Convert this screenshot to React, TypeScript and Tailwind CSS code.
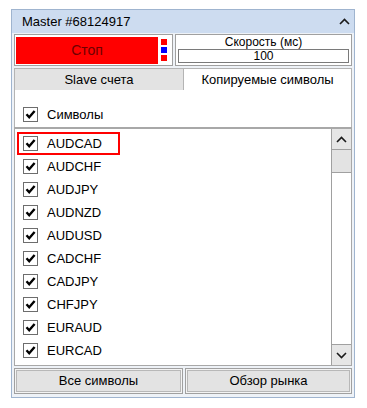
import React from 'react';

const symbols = [
  'AUDCAD',
  'AUDCHF',
  'AUDJPY',
  'AUDNZD',
  'AUDUSD',
  'CADCHF',
  'CADJPY',
  'CHFJPY',
  'EURAUD',
  'EURCAD',
];

const CheckBox = () => (
  <div className="w-[15px] h-[15px] border border-[#6d6d6d] bg-white flex items-center justify-center shrink-0">
    <svg width="11" height="11" viewBox="0 0 11 11">
      <path d="M1.5 5.3 L4.2 8.2 L9.6 2" fill="none" stroke="#000" strokeWidth="2.4" />
    </svg>
  </div>
);

const Chevron = ({ down }: { down?: boolean }) => (
  <svg width="11" height="7" viewBox="0 0 11 7">
    <path
      d={down ? 'M1 1 L5.5 5.5 L10 1' : 'M1 6 L5.5 1.5 L10 6'}
      fill="none"
      stroke="#1a1a1a"
      strokeWidth="1.6"
    />
  </svg>
);

const SymbolRow = ({ name, active }: { name: string; active?: boolean }) => (
  <div className="h-[23px] flex items-center">
    <div
      className={
        active
          ? 'ml-[2px] w-[103px] h-[23px] border-2 border-[#ff0000] flex items-center gap-[9px] pl-[4px]'
          : 'ml-[2px] w-[103px] h-[23px] border-2 border-transparent flex items-center gap-[9px] pl-[4px]'
      }
    >
      <CheckBox />
      <span className="text-[13px] text-black">{name}</span>
    </div>
  </div>
);

export default function App() {
  return (
    <div className="w-[367px] h-[408px] bg-white pt-[9px] pl-[11px]" style={{ fontFamily: '"Liberation Sans", Arial, sans-serif' }}>
      <div className="w-[344px] h-[389px] border border-[#9fb4cf] bg-[#eef2f7] flex flex-col">
        <div className="h-[23px] bg-[#cddcf0] flex items-center justify-between pl-[10px] pr-[4px]">
          <span className="text-[13px] text-black">Master #68124917</span>
          <Chevron />
        </div>

        <div className="px-[2px] pt-[1px] flex flex-col">
          <div className="flex gap-[2px] h-[32px]">
            <div className="w-[159px] border border-[#a0a0a0] bg-white flex items-center p-[1px] gap-[2px]">
              <div className="w-[142px] h-[27px] bg-[#ff0000] flex items-center justify-center text-[14px] text-[#6e0000]">
                Стоп
              </div>
              <div className="flex flex-col gap-[2px] ml-[1px]">
                <div className="w-[6px] h-[6px] bg-[#ff0000]" />
                <div className="w-[6px] h-[6px] bg-[#0000ff]" />
                <div className="w-[6px] h-[6px] bg-[#ff0000]" />
              </div>
            </div>
            <div className="flex-1 border border-[#a0a0a0] bg-white flex flex-col items-stretch px-[2px]">
              <div className="h-[14px] flex items-center justify-center text-[12px] text-black leading-none">
                Скорость (мс)
              </div>
              <div className="h-[14px] border border-[#7a7a7a] flex items-center justify-center text-[12px] text-black leading-none">
                100
              </div>
            </div>
          </div>

          <div className="flex mt-[2px] h-[22px]">
            <div className="w-[170px] bg-[#e3e3e3] border border-[#b4b4b4] border-b-0 flex items-center justify-center text-[13px] text-black">
              Slave счета
            </div>
            <div className="flex-1 bg-white border border-[#b4b4b4] border-b-0 border-l-0 flex items-center justify-center text-[13px] text-black">
              Копируемые символы
            </div>
          </div>

          <div className="h-[37px] bg-white border-x border-[#b4b4b4] flex items-end pb-[5px] pl-[8px] gap-[9px]">
            <CheckBox />
            <span className="text-[13px] text-black leading-[15px]">Символы</span>
          </div>

          <div className="h-[239px] bg-white border-t-2 border-[#a8a8a8] border-x border-b flex">
            <div className="flex-1 flex flex-col pt-[3px]">
              {symbols.map((s, i) => (
                <SymbolRow key={s} name={s} active={i === 0} />
              ))}
            </div>
            <div className="w-[20px] border-l border-[#a0a0a0] flex flex-col">
              <div className="h-[21px] bg-[#e6e6e6] border-b border-[#a0a0a0] flex items-center justify-center">
                <Chevron />
              </div>
              <div className="h-[23px] bg-[#e3e3e3] border-b border-[#a0a0a0]" />
              <div className="flex-1 bg-white" />
              <div className="h-[21px] bg-[#e6e6e6] border-t border-[#a0a0a0] flex items-center justify-center">
                <Chevron down />
              </div>
            </div>
          </div>

          <div className="flex gap-[2px] mt-[2px] h-[26px]">
            <div className="w-[169px] border border-[#a0a0a0] p-[1px] bg-[#f4f4f4]">
              <div className="h-full bg-[#e3e3e3] border border-[#b8b8b8] flex items-center justify-center text-[13px] text-black">
                Все символы
              </div>
            </div>
            <div className="flex-1 border border-[#a0a0a0] p-[1px] bg-[#f4f4f4]">
              <div className="h-full bg-[#e3e3e3] border border-[#b8b8b8] flex items-center justify-center text-[13px] text-black">
                Обзор рынка
              </div>
            </div>
          </div>
        </div>
      </div>
    </div>
  );
}
